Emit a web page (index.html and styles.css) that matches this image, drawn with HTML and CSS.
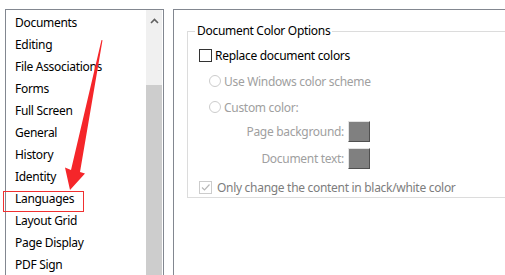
FILE: index.html
```html
<!DOCTYPE html>
<html>
<head>
<meta charset="utf-8">
<link rel="stylesheet" href="styles.css">
</head>
<body>
<div class="window">
  <div class="listbox">
    <ul class="items">
      <li>Documents</li>
      <li>Editing</li>
      <li>File Associations</li>
      <li>Forms</li>
      <li>Full Screen</li>
      <li>General</li>
      <li>History</li>
      <li>Identity</li>
      <li>Languages</li>
      <li>Layout Grid</li>
      <li>Page Display</li>
      <li>PDF Sign</li>
    </ul>
    <div class="scrollbar">
      <div class="arrow-up"><svg width="9" height="6" viewBox="0 0 9 6"><path d="M1 5 L4.5 1.5 L8 5" fill="none" stroke="#606060" stroke-width="1.6"/></svg></div>
      <div class="track"></div>
      <div class="thumb"></div>
    </div>
  </div>
  <div class="panel">
    <fieldset class="group">
      <legend>Document Color Options</legend>
      <div class="row row-replace"><span class="cb"></span><span class="lbl">Replace document colors</span></div>
      <div class="row row-radio1"><span class="radio"></span><span class="lbl dis">Use Windows color scheme</span></div>
      <div class="row row-radio2"><span class="radio"></span><span class="lbl dis">Custom color:</span></div>
      <div class="colors">
        <span class="clabel dis">Page background:</span><span class="swatch"></span>
        <span class="clabel dis">Document text:</span><span class="swatch"></span>
      </div>
      <div class="row row-only"><span class="cb cb-dis"><svg width="11" height="11" viewBox="0 0 11 11"><path d="M2 5.5 L4.5 8 L9.5 2.5" fill="none" stroke="#b8b8b8" stroke-width="1.2"/></svg></span><span class="lbl dis2">Only change the content in black/white color</span></div>
    </fieldset>
  </div>
</div>
<div class="highlight"></div>
<svg class="annot-arrow" width="60" height="160" viewBox="0 0 60 160">
  <path d="M43.5 0 L44.5 0.3 L22 132 L27 133.5 L12 150 L7 127.5 L13 130 Z" fill="#f5262a"/>
</svg>
</body>
</html>
```
FILE: styles.css
```css
html, body {
  margin: 0;
  padding: 0;
  background: #ffffff;
  overflow: hidden;
  width: 505px;
  height: 275px;
}
body {
  position: relative;
  font-family: "Noto Sans", "Open Sans", sans-serif;
  font-size: 12px;
  letter-spacing: -0.3px;
  color: #000;
}
.window {
  display: flex;
  align-items: flex-start;
  padding-top: 9px;
  height: 266px;
  overflow: hidden;
}
.listbox {
  flex: 0 0 auto;
  margin-left: 5px;
  width: 157px;
  height: 280px;
  border: 1px solid #828790;
  display: flex;
}
.items {
  list-style: none;
  margin: 0;
  padding: 2px 0 0 9px;
  flex: 1;
}
.items li {
  height: 22px;
  line-height: 22px;
  white-space: nowrap;
}
.scrollbar {
  width: 16px;
  margin-right: 1px;
  background: #f0f0f0;
  display: flex;
  flex-direction: column;
}
.arrow-up {
  height: 14px;
  display: flex;
  justify-content: center;
  align-items: flex-end;
}
.track {
  height: 61px;
}
.thumb {
  flex: 1;
  background: #cdcdcd;
}
.panel {
  margin-left: 9px;
  flex: 1 1 auto;
  min-width: 0;
  height: 280px;
  border-left: 1px solid #828790;
  border-top: 1px solid #828790;
  overflow: hidden;
}
.group {
  margin: 13px 0 0 13px;
  padding: 0;
  width: 400px;
  height: 173px;
  border: 1px solid #dcdcdc;
  border-right: none;
}
.group legend {
  margin-left: 7px;
  padding: 0 2px 0 2px;
  line-height: 16px;
}
.row {
  display: flex;
  align-items: center;
  height: 18px;
}
.row-replace {
  margin-top: 7px;
  padding-left: 11px;
}
.row-radio1 {
  margin-top: 8px;
  padding-left: 21px;
}
.row-radio2 {
  margin-top: 8px;
  padding-left: 21px;
}
.row-only {
  margin-top: 9px;
  padding-left: 11px;
}
.cb {
  width: 11px;
  height: 11px;
  border: 1px solid #333;
  background: #fff;
  margin-right: 3px;
  display: inline-flex;
}
.cb-dis {
  border-color: #cccccc;
  margin-right: 5px;
}
.radio {
  width: 10px;
  height: 10px;
  border: 1px solid #cccccc;
  border-radius: 50%;
  margin-right: 3px;
}
.lbl {
  white-space: nowrap;
}
.dis { color: #a0a0a0; }
.dis2 { color: #7d7d7d; }
.colors {
  display: grid;
  grid-template-columns: 156px 22px;
  column-gap: 4px;
  row-gap: 6px;
  margin-top: 5px;
  align-items: center;
}
.clabel {
  text-align: right;
  white-space: nowrap;
}
.swatch {
  width: 20px;
  height: 19px;
  background: #808080;
  border-top: 1px solid #e3e3e3;
  border-left: 1px solid #e3e3e3;
  border-right: 1px solid #505050;
  border-bottom: 1px solid #505050;
}
.highlight {
  position: absolute;
  left: 3px;
  top: 191px;
  width: 79px;
  height: 19px;
  border: 1px solid #f03030;
}
.annot-arrow {
  position: absolute;
  left: 58px;
  top: 40px;
}
```
